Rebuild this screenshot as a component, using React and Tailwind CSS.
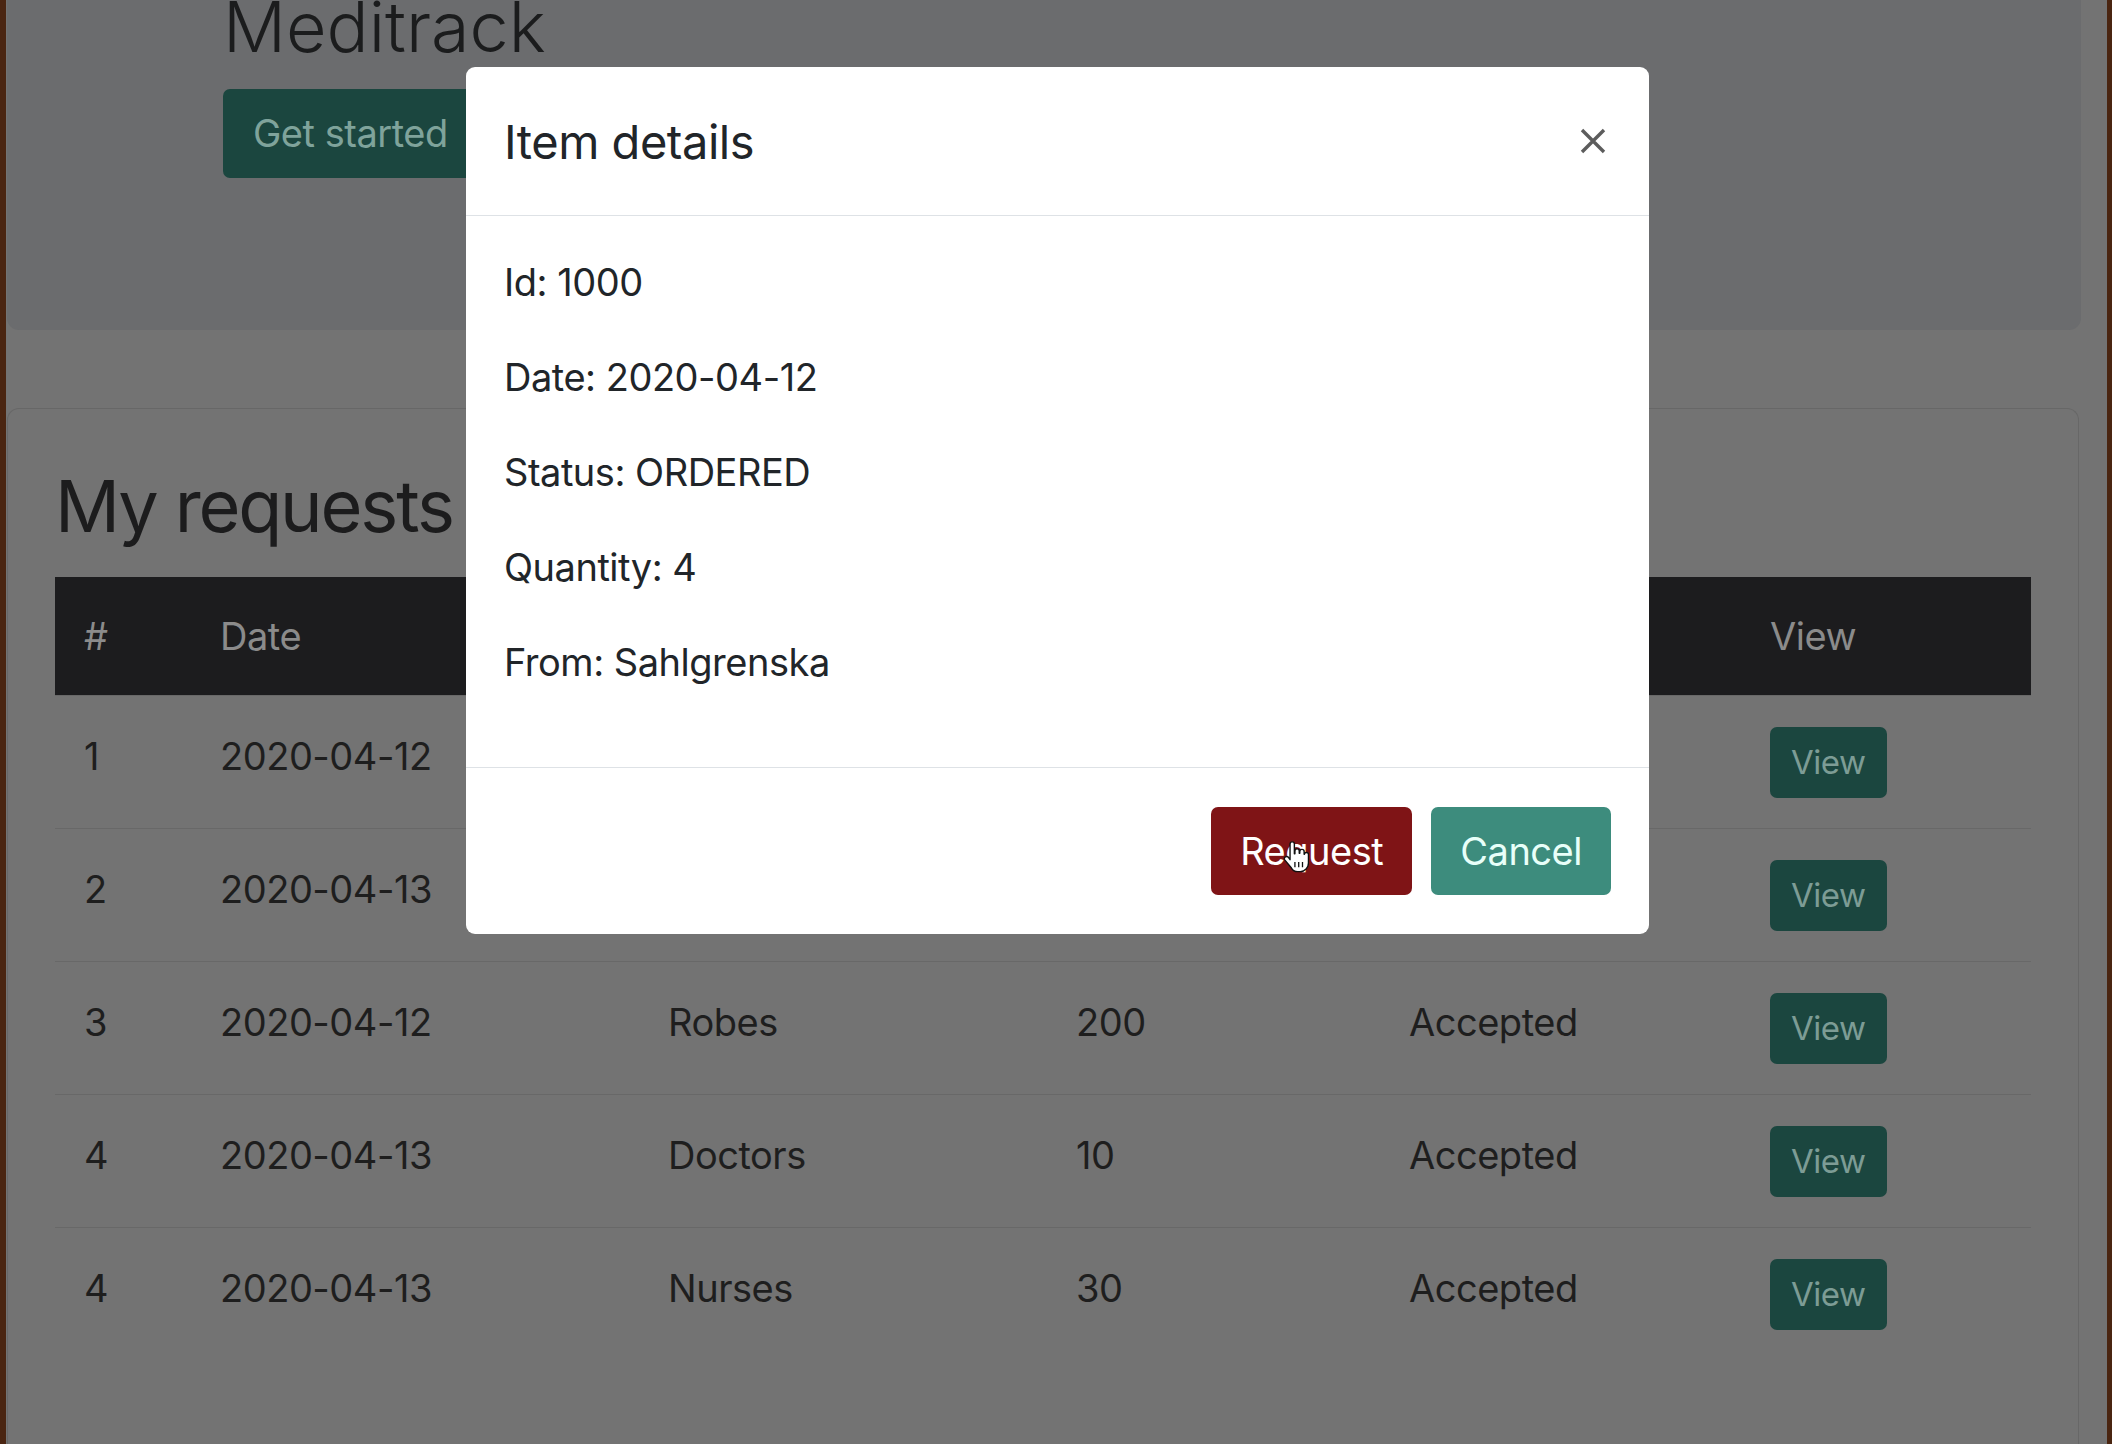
import React from "react";

// Cells hidden behind the modal are left blank
const rows = [
  { n: "1", date: "2020-04-12", item: "", qty: "", status: "" },
  { n: "2", date: "2020-04-13", item: "", qty: "", status: "" },
  { n: "3", date: "2020-04-12", item: "Robes", qty: "200", status: "Accepted" },
  { n: "4", date: "2020-04-13", item: "Doctors", qty: "10", status: "Accepted" },
  { n: "4", date: "2020-04-13", item: "Nurses", qty: "30", status: "Accepted" },
];

const cols = "grid grid-cols-[136px_448px_408px_333px_361px_289px] items-center";

const HandCursor = () => (
  <svg width="26" height="34" viewBox="0 0 24 31" className="absolute left-[1283px] top-[840px]">
    <path
      d="M8.5 1.5c1.1 0 2 .9 2 2v9h.5v-2.5c0-1.1.9-2 2-2s2 .9 2 2V12h.5v-1.5c0-1.1.9-2 2-2s2 .9 2 2V13h.3c0-1 .8-1.7 1.8-1.7s1.9.8 1.9 1.9V21c0 4.4-3.2 8-7.6 8h-2.4c-2.4 0-4.5-1.3-5.7-3.3L1.6 18.2c-.6-1-.3-2.2.6-2.8.9-.6 2.1-.4 2.8.4L6.5 18V3.5c0-1.1.9-2 2-2z"
      fill="#fff"
      stroke="#111"
      strokeWidth="1.3"
      strokeLinejoin="round"
    />
    <path d="M11 20v5M14.5 20v5M18 20v5" stroke="#111" strokeWidth="1.2" />
  </svg>
);

export default function App() {
  return (
    <div className="relative w-[2112px] h-[1444px] overflow-hidden bg-[#4a2511] pl-[6px] pr-[5px] font-[Inter,sans-serif] tracking-[-0.03em]">
      <div className="h-full bg-[#737373] flex flex-col">
        {/* Jumbotron */}
        <div className="ml-[1px] w-[2074px] h-[330px] shrink-0 rounded-b-[12px] bg-[#6b6c6e] pl-[216px]">
          <h1 className="mt-[-8px] text-[70px] leading-none font-light tracking-normal text-[#1b1c1d]">
            Meditrack
          </h1>
          <button className="mt-[27px] h-[89px] px-[30px] rounded-[7px] bg-[#1b463f] text-[38px] leading-[57px] text-[#7fa39b]">
            Get started
          </button>
        </div>

        {/* Requests card */}
        <div className="mt-[78px] ml-[1px] w-[2072px] flex-1 border border-b-0 border-[#676767] rounded-t-[12px] px-[47px] pt-[61px]">
          <h2 className="text-[72px] leading-none font-normal tracking-[-0.03em] text-[#1c1c1d] mb-[35px]">
            My requests
          </h2>

          <div className={`${cols} h-[118px] bg-[#1c1c1e] text-[38px] text-[#8b8b8b]`}>
            <div className="pl-[29px]">#</div>
            <div className="pl-[29px]">Date</div>
            <div className="pl-[29px]"></div>
            <div className="pl-[29px]"></div>
            <div className="pl-[29px]"></div>
            <div className="pl-[29px]">View</div>
          </div>

          {rows.map((r, i) => (
            <div
              key={i}
              className={`${cols} h-[133px] border-t border-[#686868] text-[38px] text-[#1e1e1e]`}
            >
              <div className="pl-[29px] mt-[-12px]">{r.n}</div>
              <div className="pl-[29px] mt-[-12px]">{r.date}</div>
              <div className="pl-[29px] mt-[-12px]">{r.item}</div>
              <div className="pl-[29px] mt-[-12px]">{r.qty}</div>
              <div className="pl-[29px] mt-[-12px]">{r.status}</div>
              <div className="pl-[29px]">
                <button className="h-[71px] px-[21px] rounded-[7px] bg-[#1b463f] text-[33px] leading-[50px] text-[#7d9c95]">
                  View
                </button>
              </div>
            </div>
          ))}
        </div>
      </div>

      {/* Modal */}
      <div className="absolute left-[466px] top-[67px] w-[1183px] rounded-[9px] bg-white flex flex-col text-[#212529]">
        <div className="h-[149px] border-b border-[#dee2e6] flex items-center justify-between pl-[38px] pr-[43px]">
          <h5 className="text-[47px] leading-[71px] font-normal">Item details</h5>
          <svg width="26" height="26" viewBox="0 0 26 26">
            <path d="M2 2L24 24M24 2L2 24" stroke="#5c5c5c" strokeWidth="3.4" />
          </svg>
        </div>
        <div className="p-[38px] text-[38px] leading-[57px]">
          <p className="mb-[38px]">Id: 1000</p>
          <p className="mb-[38px]">Date: 2020-04-12</p>
          <p className="mb-[38px]">Status: ORDERED</p>
          <p className="mb-[38px]">Quantity: 4</p>
          <p className="mb-[38px]">From: Sahlgrenska</p>
        </div>
        <div className="h-[167px] border-t border-[#dee2e6] flex items-center justify-end gap-[19px] pr-[38px]">
          <button className="h-[88px] px-[29px] rounded-[7px] bg-[#7f1416] text-white text-[38px] leading-[57px]">
            Request
          </button>
          <button className="h-[88px] px-[29px] rounded-[7px] bg-[#3d8c7d] text-[#e8fff9] text-[38px] leading-[57px]">
            Cancel
          </button>
        </div>
      </div>

      <HandCursor />
    </div>
  );
}
